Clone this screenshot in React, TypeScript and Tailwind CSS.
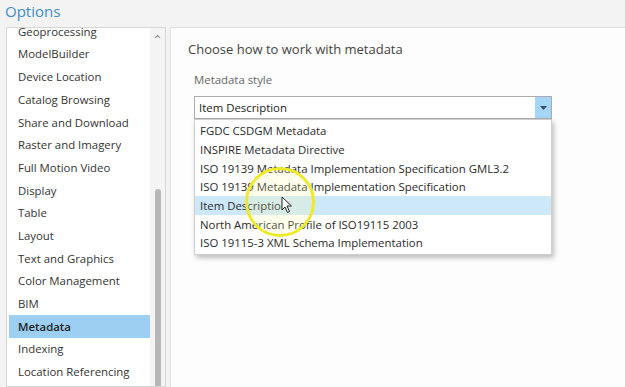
import { ChevronUp } from 'lucide-react';

const sections = [
  'Geoprocessing',
  'ModelBuilder',
  'Device Location',
  'Catalog Browsing',
  'Share and Download',
  'Raster and Imagery',
  'Full Motion Video',
  'Display',
  'Table',
  'Layout',
  'Text and Graphics',
  'Color Management',
  'BIM',
  'Metadata',
  'Indexing',
  'Location Referencing',
];

const styles = [
  'FGDC CSDGM Metadata',
  'INSPIRE Metadata Directive',
  'ISO 19139 Metadata Implementation Specification GML3.2',
  'ISO 19139 Metadata Implementation Specification',
  'Item Description',
  'North American Profile of ISO19115 2003',
  'ISO 19115-3 XML Schema Implementation',
];

export default function App() {
  const selected = 'Metadata';
  const hovered = 'Item Description';

  return (
    <div
      className="w-[625px] h-[387px] overflow-hidden bg-[#f3f3f3] text-[11.4px] text-[#333] relative"
      style={{ fontFamily: '"Open Sans", "Noto Sans", sans-serif' }}
    >
      <div className="h-[27px] pl-[5px] flex items-start text-[15px] text-[#3b8ec8] leading-none pt-[4px]">
        Options
      </div>

      <div className="flex h-[360px]">
        {/* left list */}
        <div className="ml-[6px] w-[160px] bg-white border border-[#d6d6d6] flex overflow-hidden">
          <ul className="flex-1 mt-[-8px] pl-[2px]">
            {sections.map((s) => (
              <li
                key={s}
                className={
                  'h-[22.7px] flex items-center pl-[9px] whitespace-nowrap ' +
                  (s === selected ? 'bg-[#9ccff2] font-semibold text-[#222]' : '')
                }
              >
                {s}
              </li>
            ))}
          </ul>
          <div className="w-[15px] bg-[#f4f4f4] flex flex-col items-center pt-[4px]">
            <ChevronUp className="size-[9px] text-[#9a9a9a]" strokeWidth={3} />
            <div className="mt-[148px] w-[6px] flex-1 rounded-t-full bg-[#b7b7b7]" />
          </div>
        </div>

        {/* right content */}
        <div className="ml-[4px] flex-1 bg-[#fdfdfd] border-l border-t border-[#e0e0e0] pl-[17px] pt-[12px]">
          <div className="text-[13px] text-[#444] leading-[18px]">Choose how to work with metadata</div>
          <div className="mt-[14px] ml-[6px] text-[#666] leading-[16px]">Metadata style</div>

          <div className="relative ml-[6px] mt-[8px] w-[358px]">
            <div className="h-[23px] border border-[#ababab] bg-white flex items-center">
              <span className="flex-1 pl-[4px] text-[#222]">Item Description</span>
              <div className="w-[16px] h-full bg-[#a5d5f7] flex items-center justify-center">
                <svg width="7" height="4" viewBox="0 0 7 4">
                  <path d="M0 0 L7 0 L3.5 4 Z" fill="#3d4d5c" />
                </svg>
              </div>
            </div>

            <ul className="absolute left-0 top-[23px] w-full bg-white border border-[#cfcfcf] py-[1.5px] shadow-[2px_3px_5px_rgba(0,0,0,0.25)]">
              {styles.map((s) => (
                <li
                  key={s}
                  className={
                    'h-[18.7px] flex items-center pl-[5px] whitespace-nowrap text-[#2a2a2a] ' +
                    (s === hovered ? 'bg-[#cde8f9]' : '')
                  }
                >
                  {s}
                </li>
              ))}
            </ul>
          </div>
        </div>
      </div>

      {/* cursor highlight */}
      <div className="absolute left-[245px] top-[167px] w-[70px] h-[70px] rounded-full border-[3px] border-[#eeea2a] bg-[#fff8a0]/20" />
      <svg className="absolute left-[281px] top-[196px]" width="12" height="18" viewBox="0 0 12 18">
        <path d="M1 1 L1 14 L4 11 L6.5 16.5 L8.5 15.5 L6 10 L10.5 10 Z" fill="white" stroke="#222" strokeWidth="1" strokeLinejoin="round" />
      </svg>
    </div>
  );
}
